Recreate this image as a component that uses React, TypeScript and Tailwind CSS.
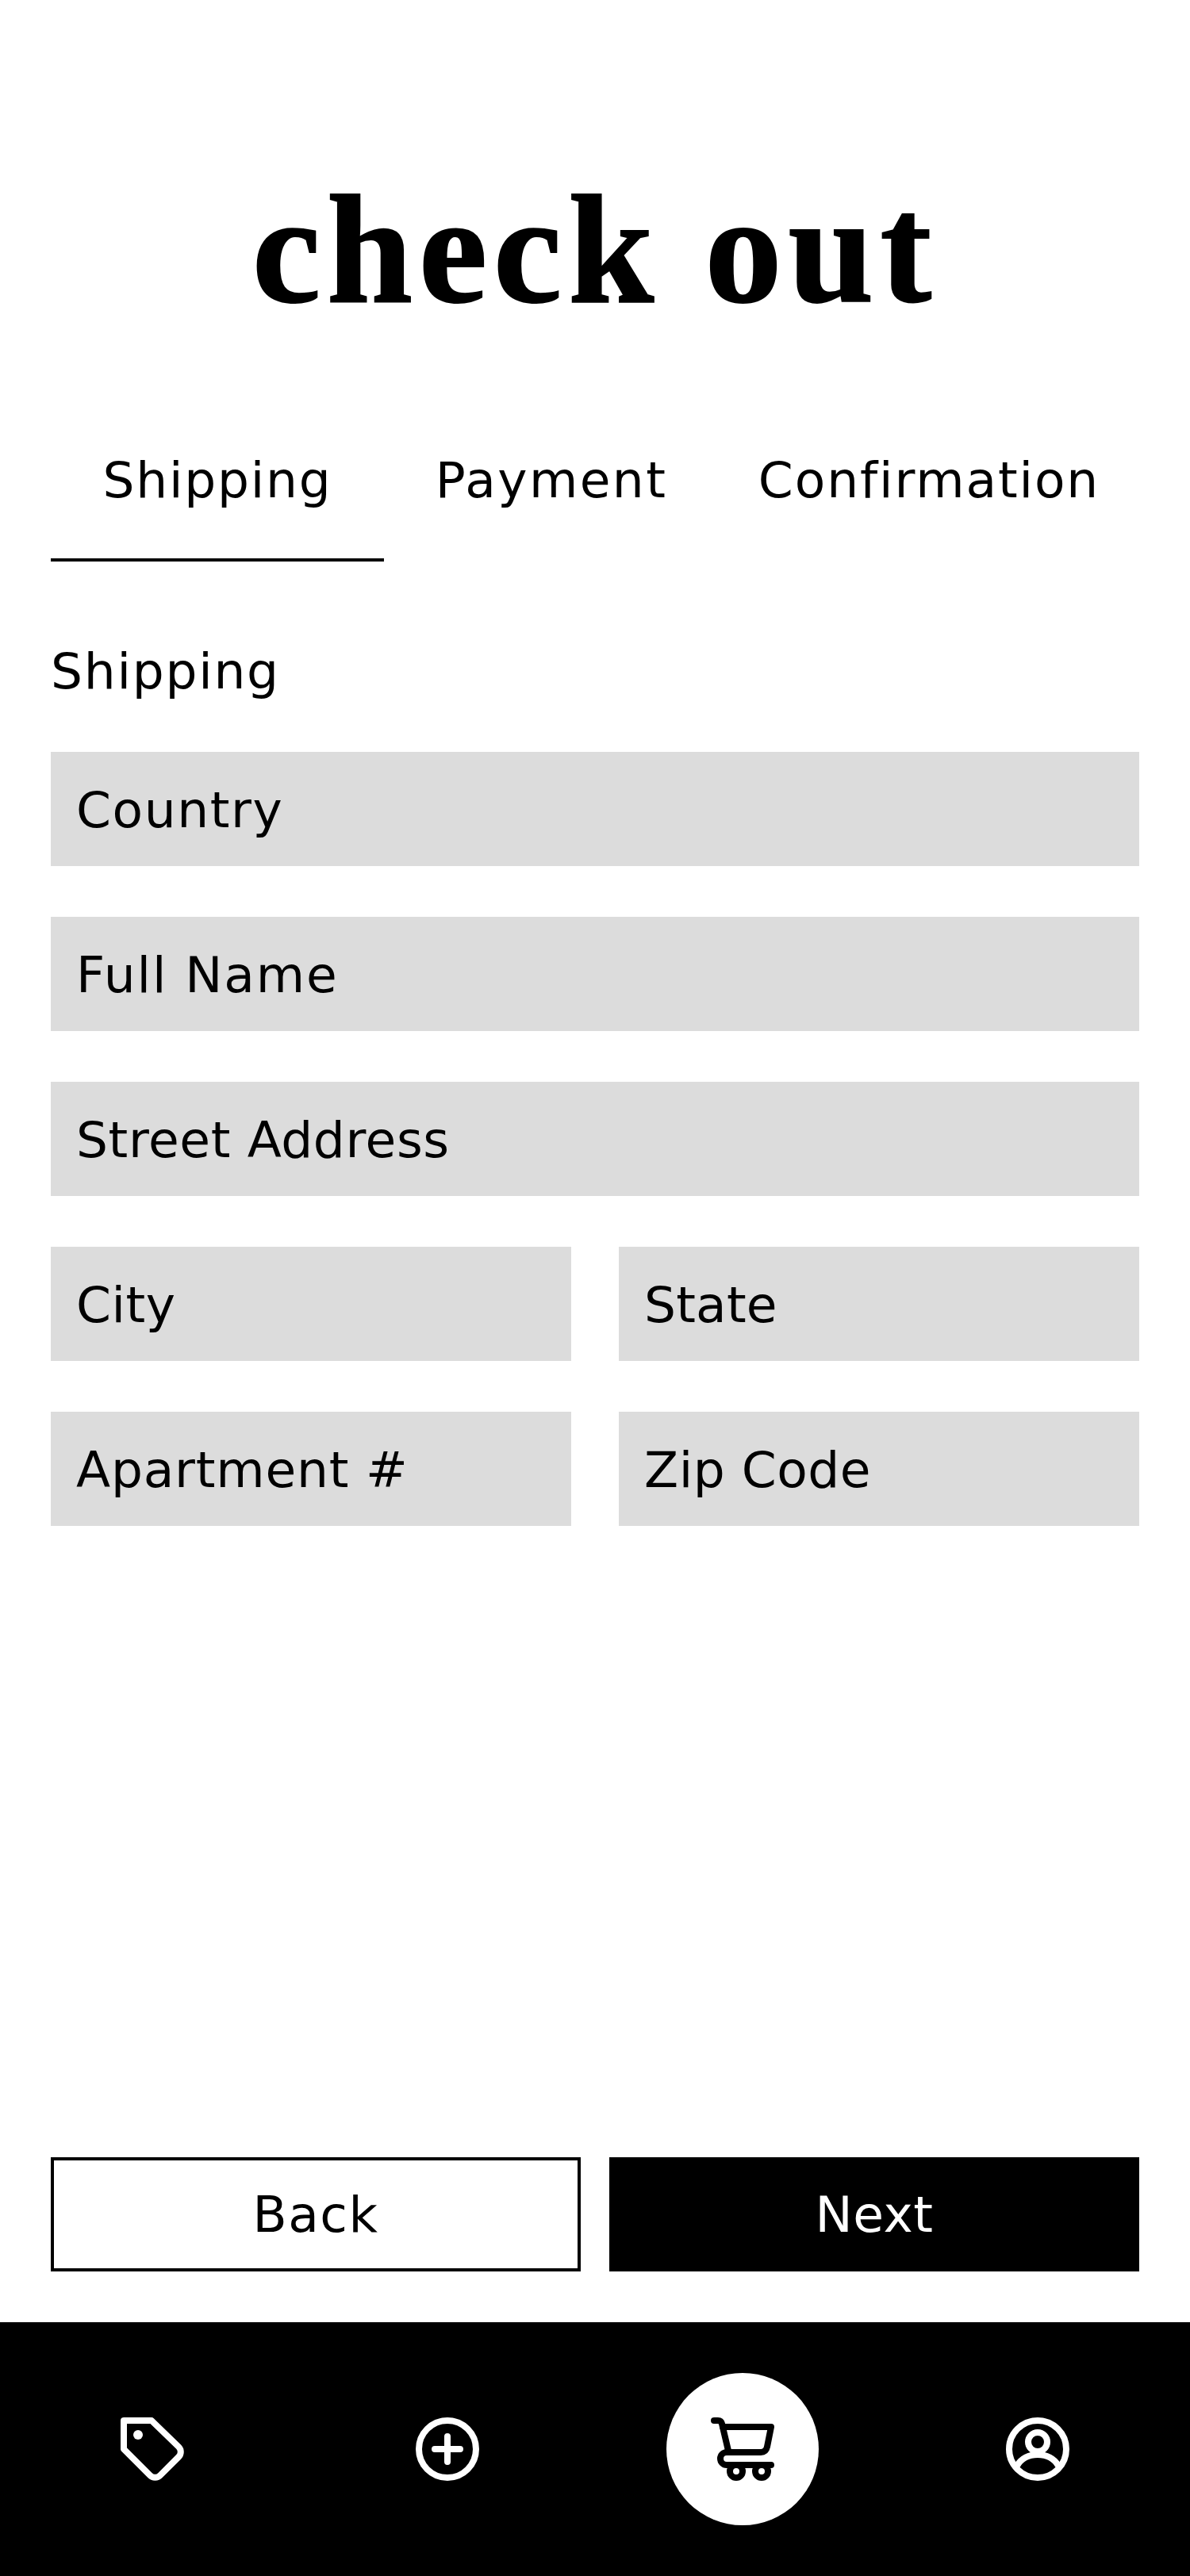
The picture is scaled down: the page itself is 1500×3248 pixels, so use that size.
import React from "react";

const sans = "[font-family:'DejaVu_Sans',sans-serif]";

function Field({ label, className = "" }: { label: string; className?: string }) {
  return (
    <input
      readOnly
      placeholder={label}
      aria-label={label}
      className={`h-36 min-w-0 bg-[#dcdcdc] pt-0.5 pl-8 text-[63px] text-black outline-none placeholder:text-black ${className}`}
    />
  );
}

function TagIcon() {
  return (
    <svg viewBox="0 0 80 80" className="h-20 w-20" fill="none" stroke="white" strokeWidth="8" strokeLinejoin="round">
      <path d="M4 4H39L73 37A9 9 0 0 1 73 50L50 73A9 9 0 0 1 37 73L4 40Z" />
      <circle cx="22" cy="22" r="6" fill="white" stroke="none" />
    </svg>
  );
}

function PlusIcon() {
  return (
    <svg viewBox="0 0 80 80" className="h-20 w-20" fill="none" stroke="white" strokeWidth="8" strokeLinecap="round">
      <circle cx="40" cy="40" r="36" />
      <path d="M24 40H56M40 24V56" />
    </svg>
  );
}

function CartIcon() {
  return (
    <svg viewBox="0 0 80 80" className="h-20 w-20" fill="none" stroke="black" strokeWidth="8" strokeLinecap="round" strokeLinejoin="round">
      <path d="M4 4H9Q13 4 14 8L22.5 44" />
      <path d="M15 12H76L71 37Q69.500 44 63 44H20A8 8 0 0 0 20 60H76" />
      <circle cx="32" cy="68" r="8" />
      <circle cx="64" cy="68" r="8" />
    </svg>
  );
}

function ProfileIcon() {
  return (
    <svg viewBox="0 0 80 80" className="h-20 w-20" fill="none" stroke="white" strokeWidth="8">
      <circle cx="40" cy="40" r="36" />
      <circle cx="40" cy="31" r="12" />
      <path d="M14 61C19 52 29 47 40 47C51 47 61 52 66 61" />
    </svg>
  );
}

export default function App() {
  return (
    <div className={`flex h-[3248px] w-[1500px] flex-col bg-white text-black ${sans}`}>
      <h1 className="mt-[218px] text-center text-[194px] leading-[194px] font-bold tracking-[8px] [-webkit-text-stroke:2px_black] [font-family:'Liberation_Serif',serif]">
        check out
      </h1>
      <div className="mt-[118px] flex px-16 text-center text-[63px] leading-[80px]">
        <div className="h-[178px] w-[420px] border-b-4 border-black pt-9 tracking-[1.75px]">Shipping</div>
        <div className="h-[178px] w-[422px] pt-9 tracking-[2.4px]">Payment</div>
        <div className="h-[178px] w-[530px] pt-9 tracking-[1.9px]">Confirmation</div>
      </div>
      <div className="mt-[99px] px-16 text-[63px] leading-[80px] tracking-[1.75px]">Shipping</div>
      <div className="mt-[61px] grid grid-cols-2 gap-x-[60px] gap-y-16 px-16">
        <Field label="Country" className="col-span-2 tracking-[1.6px]" />
        <Field label="Full Name" className="col-span-2 tracking-[1.9px]" />
        <Field label="Street Address" className="col-span-2 tracking-[0.6px]" />
        <Field label="City" className="tracking-[0.5px]" />
        <Field label="State" className="tracking-[0.2px]" />
        <Field label="Apartment #" className="tracking-[0.8px]" />
        <Field label="Zip Code" className="tracking-[0.5px]" />
      </div>
      <div className="mt-auto grid grid-cols-2 gap-9 px-16 pb-16 text-[63px]">
        <button className="h-36 border-4 border-black bg-white pt-0.5 tracking-[1.5px]">Back</button>
        <button className="h-36 bg-black pt-0.5 tracking-[0.5px] text-white">Next</button>
      </div>
      <nav className="grid h-80 w-full grid-cols-4 items-center bg-black px-1.5">
        <div className="flex justify-center"><TagIcon /></div>
        <div className="flex justify-center"><PlusIcon /></div>
        <div className="flex justify-center">
          <div className="flex h-48 w-48 items-center justify-center rounded-full bg-white"><CartIcon /></div>
        </div>
        <div className="flex justify-center"><ProfileIcon /></div>
      </nav>
    </div>
  );
}
